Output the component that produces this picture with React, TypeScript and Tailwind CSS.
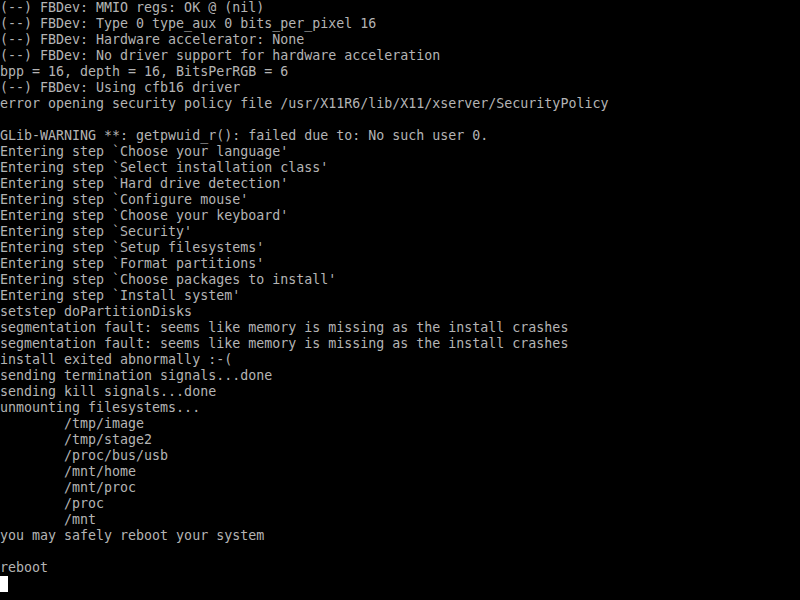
const lines: string[] = [
    "(--) FBDev: MMIO regs: OK @ (nil)",
    "(--) FBDev: Type 0 type_aux 0 bits_per_pixel 16",
    "(--) FBDev: Hardware accelerator: None",
    "(--) FBDev: No driver support for hardware acceleration",
    "bpp = 16, depth = 16, BitsPerRGB = 6",
    "(--) FBDev: Using cfb16 driver",
    "error opening security policy file /usr/X11R6/lib/X11/xserver/SecurityPolicy",
    "",
    "GLib-WARNING **: getpwuid_r(): failed due to: No such user 0.",
    "Entering step `Choose your language'",
    "Entering step `Select installation class'",
    "Entering step `Hard drive detection'",
    "Entering step `Configure mouse'",
    "Entering step `Choose your keyboard'",
    "Entering step `Security'",
    "Entering step `Setup filesystems'",
    "Entering step `Format partitions'",
    "Entering step `Choose packages to install'",
    "Entering step `Install system'",
    "setstep doPartitionDisks",
    "segmentation fault: seems like memory is missing as the install crashes",
    "segmentation fault: seems like memory is missing as the install crashes",
    "install exited abnormally :-(",
    "sending termination signals...done",
    "sending kill signals...done",
    "unmounting filesystems...",
    "        /tmp/image",
    "        /tmp/stage2",
    "        /proc/bus/usb",
    "        /mnt/home",
    "        /mnt/proc",
    "        /proc",
    "        /mnt",
    "you may safely reboot your system",
    "",
    "reboot",
];

export default function App() {
    return (
        <div className="w-[800px] h-[600px] overflow-hidden bg-black text-[#b4b4b4] font-['DejaVu_Sans_Mono',monospace] text-[13.3px] leading-[16px]">
            {lines.map((line, i) => (
                <div key={i} className="h-4 whitespace-pre">
                    {line}
                </div>
            ))}
            {/* Cursor */}
            <div className="h-4 flex items-end">
                <div className="w-2 h-4 bg-white" />
            </div>
        </div>
    );
}
